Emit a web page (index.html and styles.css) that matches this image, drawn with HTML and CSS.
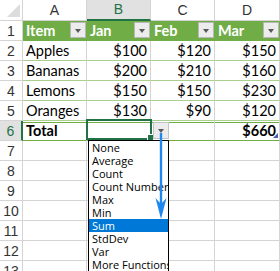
FILE: index.html
```html
<!DOCTYPE html>
<html lang="en">
<head>
    <meta charset="UTF-8">
    <title>Total Row</title>
    <link rel="stylesheet" href="styles.css">
</head>
<body>
    <div class="sheet">
        <div class="corner"><span class="tri"></span></div>
        <div class="col-head">A</div>
        <div class="col-head sel">B</div>
        <div class="col-head">C</div>
        <div class="col-head">D</div>

        <div class="row-head">1</div>
        <div class="cell th">Item<span class="filter"></span></div>
        <div class="cell th">Jan<span class="filter"></span></div>
        <div class="cell th">Feb<span class="filter"></span></div>
        <div class="cell th">Mar<span class="filter"></span></div>

        <div class="row-head">2</div>
        <div class="cell td">Apples</div>
        <div class="cell td num">$100</div>
        <div class="cell td num">$120</div>
        <div class="cell td num">$150</div>

        <div class="row-head">3</div>
        <div class="cell td">Bananas</div>
        <div class="cell td num">$200</div>
        <div class="cell td num">$210</div>
        <div class="cell td num">$160</div>

        <div class="row-head">4</div>
        <div class="cell td">Lemons</div>
        <div class="cell td num">$150</div>
        <div class="cell td num">$150</div>
        <div class="cell td num">$230</div>

        <div class="row-head">5</div>
        <div class="cell td">Oranges</div>
        <div class="cell td num">$130</div>
        <div class="cell td num">$90</div>
        <div class="cell td num">$120</div>

        <div class="row-head sel">6</div>
        <div class="cell total">Total</div>
        <div class="cell total active">
            <span class="selbox"><span class="handle"></span></span>
            <span class="cell-drop"></span>
            <ul class="menu">
                <li>None</li>
                <li>Average</li>
                <li>Count</li>
                <li>Count Numbers</li>
                <li>Max</li>
                <li>Min</li>
                <li class="hl">Sum</li>
                <li>StdDev</li>
                <li>Var</li>
                <li>More Functions...</li>
            </ul>
        </div>
        <div class="cell total"></div>
        <div class="cell total num">$660<span class="resize"></span></div>

        <div class="row-head">7</div><div class="cell"></div><div class="cell"></div><div class="cell"></div><div class="cell"></div>
        <div class="row-head">8</div><div class="cell"></div><div class="cell"></div><div class="cell"></div><div class="cell"></div>
        <div class="row-head">9</div><div class="cell"></div><div class="cell"></div><div class="cell"></div><div class="cell"></div>
        <div class="row-head">10</div><div class="cell"></div><div class="cell"></div><div class="cell"></div><div class="cell"></div>
        <div class="row-head">11</div><div class="cell"></div><div class="cell"></div><div class="cell"></div><div class="cell"></div>
        <div class="row-head">12</div><div class="cell"></div><div class="cell"></div><div class="cell"></div><div class="cell"></div>
        <div class="row-head">13</div><div class="cell"></div><div class="cell"></div><div class="cell"></div><div class="cell"></div>

        <svg class="arrow" width="20" height="100" viewBox="150 130 20 100">
            <line x1="161" y1="133" x2="161" y2="206" stroke="#1e88f0" stroke-width="2.4"/>
            <polygon points="155.5,198 161,204 166.5,198 161,219" fill="#1e88f0"/>
        </svg>
    </div>
</body>
</html>
```

FILE: styles.css
```css
body {
    margin: 0;
    padding: 0;
    background: #fff;
    overflow: hidden;
}

.sheet {
    position: relative;
    display: grid;
    grid-template-columns: 23px 64px 64px 64px 65px;
    grid-template-rows: 21px;
    grid-auto-rows: 20px;
    width: 280px;
    height: 271px;
    overflow: hidden;
    font-family: Lato, "Liberation Sans", sans-serif;
    font-size: 14.5px;
    color: #000;
}

.sheet > div {
    box-sizing: border-box;
}

.corner {
    position: relative;
    border-right: 1px solid #d4d4d4;
    border-bottom: 1px solid #d4d4d4;
}

.corner .tri {
    position: absolute;
    right: 2px;
    bottom: 3px;
    width: 0;
    height: 0;
    border-left: 13px solid transparent;
    border-bottom: 13px solid #dcdcdc;
}

.col-head {
    border-right: 1px solid #d4d4d4;
    border-bottom: 1px solid #d4d4d4;
    text-align: center;
    color: #333;
    line-height: 20px;
    font-family: "Liberation Sans", sans-serif;
    font-size: 14px;
}

.col-head.sel {
    background: #e1e1e1;
    color: #217346;
    border-bottom: 2px solid #217346;
    line-height: 19px;
}

.row-head {
    border-right: 1px solid #d4d4d4;
    border-bottom: 1px solid #d4d4d4;
    text-align: center;
    color: #333;
    line-height: 20px;
    font-family: "Liberation Sans", sans-serif;
    font-size: 14px;
}

.row-head.sel {
    background: #e1e1e1;
    color: #217346;
    border-right: 2px solid #217346;
}

.cell {
    position: relative;
    border-right: 1px solid #d4d4d4;
    border-bottom: 1px solid #d4d4d4;
    padding: 0 3px;
    line-height: 20px;
    white-space: nowrap;
}

.num {
    text-align: right;
}

.th {
    background: #70ad47;
    color: #fff;
    font-weight: bold;
    border-right: none;
    border-bottom: 1px solid #70ad47;
}

.filter {
    position: absolute;
    right: 1px;
    top: 1px;
    width: 16px;
    height: 16px;
    box-sizing: border-box;
    background: #ececec;
    border: 1px solid #b8b8b8;
}

.filter::after,
.cell-drop::after {
    content: "";
    position: absolute;
    left: 4px;
    top: 6px;
    border-left: 3.5px solid transparent;
    border-right: 3.5px solid transparent;
    border-top: 4px solid #595959;
}

.td {
    border-bottom: 1px solid #a9d08e;
}

.total {
    font-weight: bold;
    border-bottom: 1px solid #70ad47;
    background: linear-gradient(to bottom, #70ad47 0, #70ad47 1px, transparent 1px) 0 1px / 100% 2px no-repeat;
}

.active {
    z-index: 2;
}

.selbox {
    position: absolute;
    left: -1px;
    right: -2px;
    top: -2px;
    bottom: 0;
    border: 2px solid #217346;
}

.handle {
    position: absolute;
    right: -4px;
    bottom: -3px;
    width: 5px;
    height: 5px;
    background: #217346;
    border: 1px solid #fff;
}

.cell-drop {
    position: absolute;
    left: 66px;
    top: 1px;
    width: 16px;
    height: 17px;
    box-sizing: border-box;
    background: #ececec;
    border: 1px solid #c4c4c4;
}

.resize {
    position: absolute;
    right: 1px;
    bottom: 2px;
    border-left: 5px solid transparent;
    border-bottom: 5px solid #4a5fa8;
}

.menu {
    position: absolute;
    left: 1px;
    top: 19px;
    width: 81px;
    margin: 0;
    padding: 0;
    list-style: none;
    background: #fff;
    border: 1px solid #000;
    box-sizing: border-box;
    overflow: hidden;
    font-family: "Open Sans", sans-serif;
    font-size: 11px;
    font-weight: normal;
    z-index: 3;
}

.menu li {
    height: 13px;
    line-height: 13px;
    padding-left: 3px;
    white-space: nowrap;
}

.menu li.hl {
    background: #0078d7;
    color: #fff;
}

.arrow {
    position: absolute;
    left: 150px;
    top: 130px;
    z-index: 5;
}
```
